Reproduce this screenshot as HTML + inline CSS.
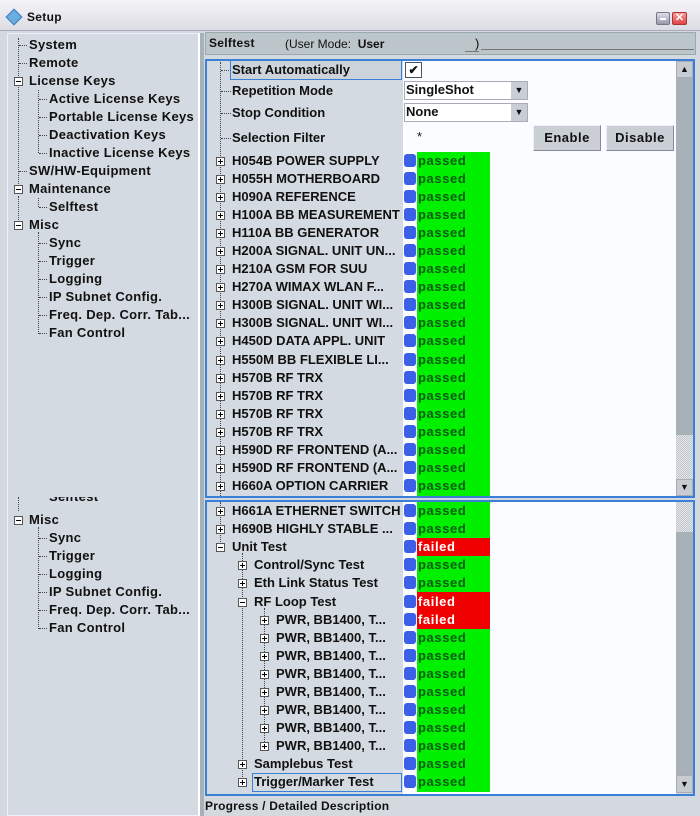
<!DOCTYPE html>
<html><head><meta charset="utf-8"><style>
*{margin:0;padding:0;box-sizing:border-box}
body{width:700px;height:816px;overflow:hidden;background:#d3d9df;font-family:"Liberation Sans",Arial,sans-serif;font-weight:bold;font-size:13px;color:#111;position:relative}
.a{position:absolute}
.t{position:absolute;white-space:nowrap;line-height:18px;height:18px;letter-spacing:0.3px}
.r .t{letter-spacing:0;max-width:172px;overflow:hidden}
.pm{position:absolute;width:9px;height:9px;border:1px solid #555;background:#fff}
.pm:before{content:"";position:absolute;left:1px;top:3px;width:5px;height:1px;background:#000}
.pm.p:after{content:"";position:absolute;left:3px;top:1px;width:1px;height:5px;background:#000}
.dv{position:absolute;border-left:1px dotted #444}
.dh{position:absolute;border-top:1px dotted #444;height:1px}
.bl{position:absolute;left:404px;width:12px;height:13px;background:#3b5fe6;border-radius:3px}
.st{position:absolute;left:417px;width:73px;height:18px;line-height:18px;padding-left:1px;letter-spacing:0.6px}
.g{background:#00f000;color:#0b5a12}
.rd{background:#f00000;color:#fff}
</style></head><body>
<div class="a" style="left:0;top:0;width:700px;height:31px;background:linear-gradient(#f4f4f8,#dcdce4);border-bottom:1px solid #aab"></div>
<div class="a" style="left:8px;top:11px;width:12px;height:12px;background:#6aaee0;transform:rotate(45deg);border:1px solid #3a7ab8"></div>
<div class="t" style="left:27px;top:8px;font-size:12px">Setup</div>
<div class="a" style="left:656px;top:12px;width:14px;height:13px;background:linear-gradient(#dde,#99a);border:1px solid #778;border-radius:2px"></div>
<div class="a" style="left:660px;top:18px;width:6px;height:2px;background:#fff"></div>
<div class="a" style="left:672px;top:12px;width:15px;height:13px;background:linear-gradient(#f99,#d44);border:1px solid #a33;border-radius:2px;color:#fff;font-size:11px;line-height:11px;text-align:center">✕</div>

<div class="a" style="left:7px;top:33px;width:193px;height:783px;background:#d4dae1;border:1px solid #eef;border-right:2px solid #fff"></div>
<div class="a" style="left:200px;top:33px;width:4px;height:783px;background:#a9b1b8"></div>
<div class="dv" style="left:18px;top:38px;height:156px"></div>
<div class="dv" style="left:38px;top:90px;height:63px"></div>
<div class="dv" style="left:38px;top:198px;height:9px"></div>
<div class="dv" style="left:18px;top:196px;height:30px"></div>
<div class="dv" style="left:38px;top:232px;height:102px"></div>
<div class="dh" style="left:19px;top:45px;width:8px"></div><div class="t" style="left:29px;top:36px">System</div>
<div class="dh" style="left:19px;top:63px;width:8px"></div><div class="t" style="left:29px;top:54px">Remote</div>
<div class="pm" style="left:14px;top:77px"></div><div class="t" style="left:29px;top:72px">License Keys</div>
<div class="dh" style="left:39px;top:99px;width:8px"></div><div class="t" style="left:49px;top:90px">Active License Keys</div>
<div class="dh" style="left:39px;top:117px;width:8px"></div><div class="t" style="left:49px;top:108px">Portable License Keys</div>
<div class="dh" style="left:39px;top:135px;width:8px"></div><div class="t" style="left:49px;top:126px">Deactivation Keys</div>
<div class="dh" style="left:39px;top:153px;width:8px"></div><div class="t" style="left:49px;top:144px">Inactive License Keys</div>
<div class="dh" style="left:19px;top:171px;width:8px"></div><div class="t" style="left:29px;top:162px">SW/HW-Equipment</div>
<div class="pm" style="left:14px;top:185px"></div><div class="t" style="left:29px;top:180px">Maintenance</div>
<div class="dh" style="left:39px;top:207px;width:8px"></div><div class="t" style="left:49px;top:198px">Selftest</div>
<div class="pm" style="left:14px;top:221px"></div><div class="t" style="left:29px;top:216px">Misc</div>
<div class="dh" style="left:39px;top:243px;width:8px"></div><div class="t" style="left:49px;top:234px">Sync</div>
<div class="dh" style="left:39px;top:261px;width:8px"></div><div class="t" style="left:49px;top:252px">Trigger</div>
<div class="dh" style="left:39px;top:279px;width:8px"></div><div class="t" style="left:49px;top:270px">Logging</div>
<div class="dh" style="left:39px;top:297px;width:8px"></div><div class="t" style="left:49px;top:288px">IP Subnet Config.</div>
<div class="dh" style="left:39px;top:315px;width:8px"></div><div class="t" style="left:49px;top:306px">Freq. Dep. Corr. Tab...</div>
<div class="dh" style="left:39px;top:333px;width:8px"></div><div class="t" style="left:49px;top:324px">Fan Control</div>
<div class="a" style="left:8px;top:497px;width:190px;height:12px;overflow:hidden"><div class="t" style="left:41px;top:-9px">Selftest</div></div>
<div class="dv" style="left:18px;top:497px;height:14px"></div>
<div class="dv" style="left:38px;top:527px;height:102px"></div>
<div class="pm" style="left:14px;top:516px"></div><div class="t" style="left:29px;top:511px">Misc</div>
<div class="dh" style="left:39px;top:538px;width:8px"></div><div class="t" style="left:49px;top:529px">Sync</div>
<div class="dh" style="left:39px;top:556px;width:8px"></div><div class="t" style="left:49px;top:547px">Trigger</div>
<div class="dh" style="left:39px;top:574px;width:8px"></div><div class="t" style="left:49px;top:565px">Logging</div>
<div class="dh" style="left:39px;top:592px;width:8px"></div><div class="t" style="left:49px;top:583px">IP Subnet Config.</div>
<div class="dh" style="left:39px;top:610px;width:8px"></div><div class="t" style="left:49px;top:601px">Freq. Dep. Corr. Tab...</div>
<div class="dh" style="left:39px;top:628px;width:8px"></div><div class="t" style="left:49px;top:619px">Fan Control</div>

<div class="a" style="left:205px;top:32px;width:491px;height:23px;background:#bcc5ca;border:1px solid #9aa"></div>
<div class="t" style="left:209px;top:34px;font-size:12px">Selftest</div>
<div class="t" style="left:285px;top:35px;font-weight:normal;font-size:12px;letter-spacing:0">(User Mode:&nbsp; <b>User</b></div>
<div class="t" style="left:475px;top:35px;font-weight:normal">)</div>
<div class="a" style="left:465px;top:51px;width:14px;height:1px;background:#777"></div>
<div class="a" style="left:481px;top:49px;width:213px;height:1px;background:#777"></div>

<div class="r">
<div class="a" style="left:205px;top:59px;width:490px;height:439px;background:#fafcff;border:2px solid #3b7fd6"></div>
<div class="a" style="left:207px;top:61px;width:196px;height:435px;background:#d4dae1"></div>
<div class="dv" style="left:220px;top:62px;height:434px"></div>
<div class="dh" style="left:221px;top:70px;width:10px"></div>
<div class="dh" style="left:221px;top:91px;width:10px"></div>
<div class="dh" style="left:221px;top:113px;width:10px"></div>
<div class="dh" style="left:221px;top:138px;width:10px"></div>
<div class="a" style="left:230px;top:60px;width:172px;height:20px;border:1px solid #3b7fd6;background:#ccd3da"></div>
<div class="t" style="left:232px;top:61px">Start Automatically</div>
<div class="t" style="left:232px;top:82px">Repetition Mode</div>
<div class="t" style="left:232px;top:104px">Stop Condition</div>
<div class="t" style="left:232px;top:129px">Selection Filter</div>
<div class="a" style="left:405px;top:62px;width:17px;height:16px;border:1px solid #456;background:#fff;font-size:12px;line-height:14px;text-align:center">✔</div>
<div class="a" style="left:404px;top:81px;width:124px;height:19px;border:1px solid #aab;background:#fff"></div>
<div class="t" style="left:406px;top:81px">SingleShot</div>
<div class="a" style="left:511px;top:82px;width:16px;height:17px;background:#c8ced4;font-size:9px;text-align:center;line-height:17px">▼</div>
<div class="a" style="left:404px;top:103px;width:124px;height:19px;border:1px solid #aab;background:#fff"></div>
<div class="t" style="left:406px;top:103px">None</div>
<div class="a" style="left:511px;top:104px;width:16px;height:17px;background:#c8ced4;font-size:9px;text-align:center;line-height:17px">▼</div>
<div class="t" style="left:417px;top:128px;font-weight:normal">*</div>
<div class="a" style="left:533px;top:125px;width:68px;height:26px;background:#c9cfd5;border:1px solid #eef;border-right-color:#889;border-bottom-color:#889;text-align:center;line-height:24px;letter-spacing:0.5px">Enable</div>
<div class="a" style="left:606px;top:125px;width:68px;height:26px;background:#c9cfd5;border:1px solid #eef;border-right-color:#889;border-bottom-color:#889;text-align:center;line-height:24px;letter-spacing:0.5px">Disable</div>
<div class="a" style="left:676px;top:61px;width:17px;height:435px;background:repeating-conic-gradient(#c0c6cc 0 25%,#e2e6ea 0 50%) 0 0/2px 2px"></div>
<div class="a" style="left:676px;top:61px;width:17px;height:17px;background:#c6ccd2;border:1px solid #aab;font-size:9px;text-align:center;line-height:15px">▲</div>
<div class="a" style="left:676px;top:78px;width:17px;height:357px;background:#a9b1b8"></div>
<div class="a" style="left:676px;top:479px;width:17px;height:17px;background:#c6ccd2;border:1px solid #aab;font-size:9px;text-align:center;line-height:15px">▼</div>

<div class="pm p" style="left:216px;top:157px"></div><div class="t" style="left:232px;top:152px">H054B POWER SUPPLY</div><div class="bl" style="top:154px"></div><div class="st g" style="top:152px">passed</div>
<div class="pm p" style="left:216px;top:175px"></div><div class="t" style="left:232px;top:170px">H055H MOTHERBOARD</div><div class="bl" style="top:172px"></div><div class="st g" style="top:170px">passed</div>
<div class="pm p" style="left:216px;top:193px"></div><div class="t" style="left:232px;top:188px">H090A REFERENCE</div><div class="bl" style="top:190px"></div><div class="st g" style="top:188px">passed</div>
<div class="pm p" style="left:216px;top:211px"></div><div class="t" style="left:232px;top:206px">H100A BB MEASUREMENT</div><div class="bl" style="top:208px"></div><div class="st g" style="top:206px">passed</div>
<div class="pm p" style="left:216px;top:229px"></div><div class="t" style="left:232px;top:224px">H110A BB GENERATOR</div><div class="bl" style="top:226px"></div><div class="st g" style="top:224px">passed</div>
<div class="pm p" style="left:216px;top:247px"></div><div class="t" style="left:232px;top:242px">H200A SIGNAL. UNIT UN...</div><div class="bl" style="top:244px"></div><div class="st g" style="top:242px">passed</div>
<div class="pm p" style="left:216px;top:265px"></div><div class="t" style="left:232px;top:260px">H210A GSM FOR SUU</div><div class="bl" style="top:262px"></div><div class="st g" style="top:260px">passed</div>
<div class="pm p" style="left:216px;top:283px"></div><div class="t" style="left:232px;top:278px">H270A WIMAX WLAN F...</div><div class="bl" style="top:280px"></div><div class="st g" style="top:278px">passed</div>
<div class="pm p" style="left:216px;top:301px"></div><div class="t" style="left:232px;top:296px">H300B SIGNAL. UNIT WI...</div><div class="bl" style="top:298px"></div><div class="st g" style="top:296px">passed</div>
<div class="pm p" style="left:216px;top:319px"></div><div class="t" style="left:232px;top:314px">H300B SIGNAL. UNIT WI...</div><div class="bl" style="top:316px"></div><div class="st g" style="top:314px">passed</div>
<div class="pm p" style="left:216px;top:337px"></div><div class="t" style="left:232px;top:332px">H450D DATA APPL. UNIT</div><div class="bl" style="top:334px"></div><div class="st g" style="top:332px">passed</div>
<div class="pm p" style="left:216px;top:356px"></div><div class="t" style="left:232px;top:351px">H550M BB FLEXIBLE LI...</div><div class="bl" style="top:353px"></div><div class="st g" style="top:350px;height:19px;line-height:20px">passed</div>
<div class="pm p" style="left:216px;top:374px"></div><div class="t" style="left:232px;top:369px">H570B RF TRX</div><div class="bl" style="top:371px"></div><div class="st g" style="top:369px">passed</div>
<div class="pm p" style="left:216px;top:392px"></div><div class="t" style="left:232px;top:387px">H570B RF TRX</div><div class="bl" style="top:389px"></div><div class="st g" style="top:387px">passed</div>
<div class="pm p" style="left:216px;top:410px"></div><div class="t" style="left:232px;top:405px">H570B RF TRX</div><div class="bl" style="top:407px"></div><div class="st g" style="top:405px">passed</div>
<div class="pm p" style="left:216px;top:428px"></div><div class="t" style="left:232px;top:423px">H570B RF TRX</div><div class="bl" style="top:425px"></div><div class="st g" style="top:423px">passed</div>
<div class="pm p" style="left:216px;top:446px"></div><div class="t" style="left:232px;top:441px">H590D RF FRONTEND (A...</div><div class="bl" style="top:443px"></div><div class="st g" style="top:441px">passed</div>
<div class="pm p" style="left:216px;top:464px"></div><div class="t" style="left:232px;top:459px">H590D RF FRONTEND (A...</div><div class="bl" style="top:461px"></div><div class="st g" style="top:459px">passed</div>
<div class="pm p" style="left:216px;top:482px"></div><div class="t" style="left:232px;top:477px">H660A OPTION CARRIER</div><div class="bl" style="top:479px"></div><div class="st g" style="top:477px;height:19px">passed</div>

<div class="a" style="left:205px;top:500px;width:490px;height:296px;background:#fafcff;border:2px solid #3b7fd6"></div>
<div class="a" style="left:207px;top:502px;width:196px;height:292px;background:#d4dae1"></div>
<div class="dv" style="left:220px;top:502px;height:40px"></div>
<div class="dv" style="left:242px;top:553px;height:230px"></div>
<div class="dv" style="left:264px;top:608px;height:138px"></div>
<div class="a" style="left:252px;top:773px;width:150px;height:19px;border:1px solid #3b7fd6"></div>
<div class="pm p" style="left:216px;top:507px"></div><div class="t" style="left:232px;top:502px">H661A ETHERNET SWITCH</div><div class="bl" style="top:504px"></div><div class="st g" style="top:502px">passed</div>
<div class="pm p" style="left:216px;top:525px"></div><div class="t" style="left:232px;top:520px">H690B HIGHLY STABLE ...</div><div class="bl" style="top:522px"></div><div class="st g" style="top:520px">passed</div>
<div class="pm" style="left:216px;top:543px"></div><div class="t" style="left:232px;top:538px">Unit Test</div><div class="bl" style="top:540px"></div><div class="st rd" style="top:538px">failed</div>
<div class="pm p" style="left:238px;top:561px"></div><div class="t" style="left:254px;top:556px">Control/Sync Test</div><div class="bl" style="top:558px"></div><div class="st g" style="top:556px">passed</div>
<div class="pm p" style="left:238px;top:579px"></div><div class="t" style="left:254px;top:574px">Eth Link Status Test</div><div class="bl" style="top:576px"></div><div class="st g" style="top:574px">passed</div>
<div class="pm" style="left:238px;top:598px"></div><div class="t" style="left:254px;top:593px">RF Loop Test</div><div class="bl" style="top:595px"></div><div class="st rd" style="top:592px;height:19px;line-height:20px">failed</div>
<div class="pm p" style="left:260px;top:616px"></div><div class="t" style="left:276px;top:611px">PWR, BB1400, T...</div><div class="bl" style="top:613px"></div><div class="st rd" style="top:611px">failed</div>
<div class="pm p" style="left:260px;top:634px"></div><div class="t" style="left:276px;top:629px">PWR, BB1400, T...</div><div class="bl" style="top:631px"></div><div class="st g" style="top:629px">passed</div>
<div class="pm p" style="left:260px;top:652px"></div><div class="t" style="left:276px;top:647px">PWR, BB1400, T...</div><div class="bl" style="top:649px"></div><div class="st g" style="top:647px">passed</div>
<div class="pm p" style="left:260px;top:670px"></div><div class="t" style="left:276px;top:665px">PWR, BB1400, T...</div><div class="bl" style="top:667px"></div><div class="st g" style="top:665px">passed</div>
<div class="pm p" style="left:260px;top:688px"></div><div class="t" style="left:276px;top:683px">PWR, BB1400, T...</div><div class="bl" style="top:685px"></div><div class="st g" style="top:683px">passed</div>
<div class="pm p" style="left:260px;top:706px"></div><div class="t" style="left:276px;top:701px">PWR, BB1400, T...</div><div class="bl" style="top:703px"></div><div class="st g" style="top:701px">passed</div>
<div class="pm p" style="left:260px;top:724px"></div><div class="t" style="left:276px;top:719px">PWR, BB1400, T...</div><div class="bl" style="top:721px"></div><div class="st g" style="top:719px">passed</div>
<div class="pm p" style="left:260px;top:742px"></div><div class="t" style="left:276px;top:737px">PWR, BB1400, T...</div><div class="bl" style="top:739px"></div><div class="st g" style="top:737px">passed</div>
<div class="pm p" style="left:238px;top:760px"></div><div class="t" style="left:254px;top:755px">Samplebus Test</div><div class="bl" style="top:757px"></div><div class="st g" style="top:755px">passed</div>
<div class="pm p" style="left:238px;top:778px"></div><div class="t" style="left:254px;top:773px">Trigger/Marker Test</div><div class="bl" style="top:775px"></div><div class="st g" style="top:773px;height:19px">passed</div>
<div class="a" style="left:676px;top:502px;width:17px;height:292px;background:repeating-conic-gradient(#c0c6cc 0 25%,#e2e6ea 0 50%) 0 0/2px 2px"></div>
<div class="a" style="left:676px;top:532px;width:17px;height:243px;background:#a9b1b8"></div>
<div class="a" style="left:676px;top:775px;width:17px;height:18px;background:#c6ccd2;border:1px solid #aab;font-size:9px;text-align:center;line-height:16px">▼</div>
</div>

<div class="a" style="left:204px;top:797px;width:492px;height:19px;background:#d3d9df"></div>
<div class="t" style="left:205px;top:797px;font-size:12px;letter-spacing:0.2px">Progress / Detailed Description</div>
</body></html>
